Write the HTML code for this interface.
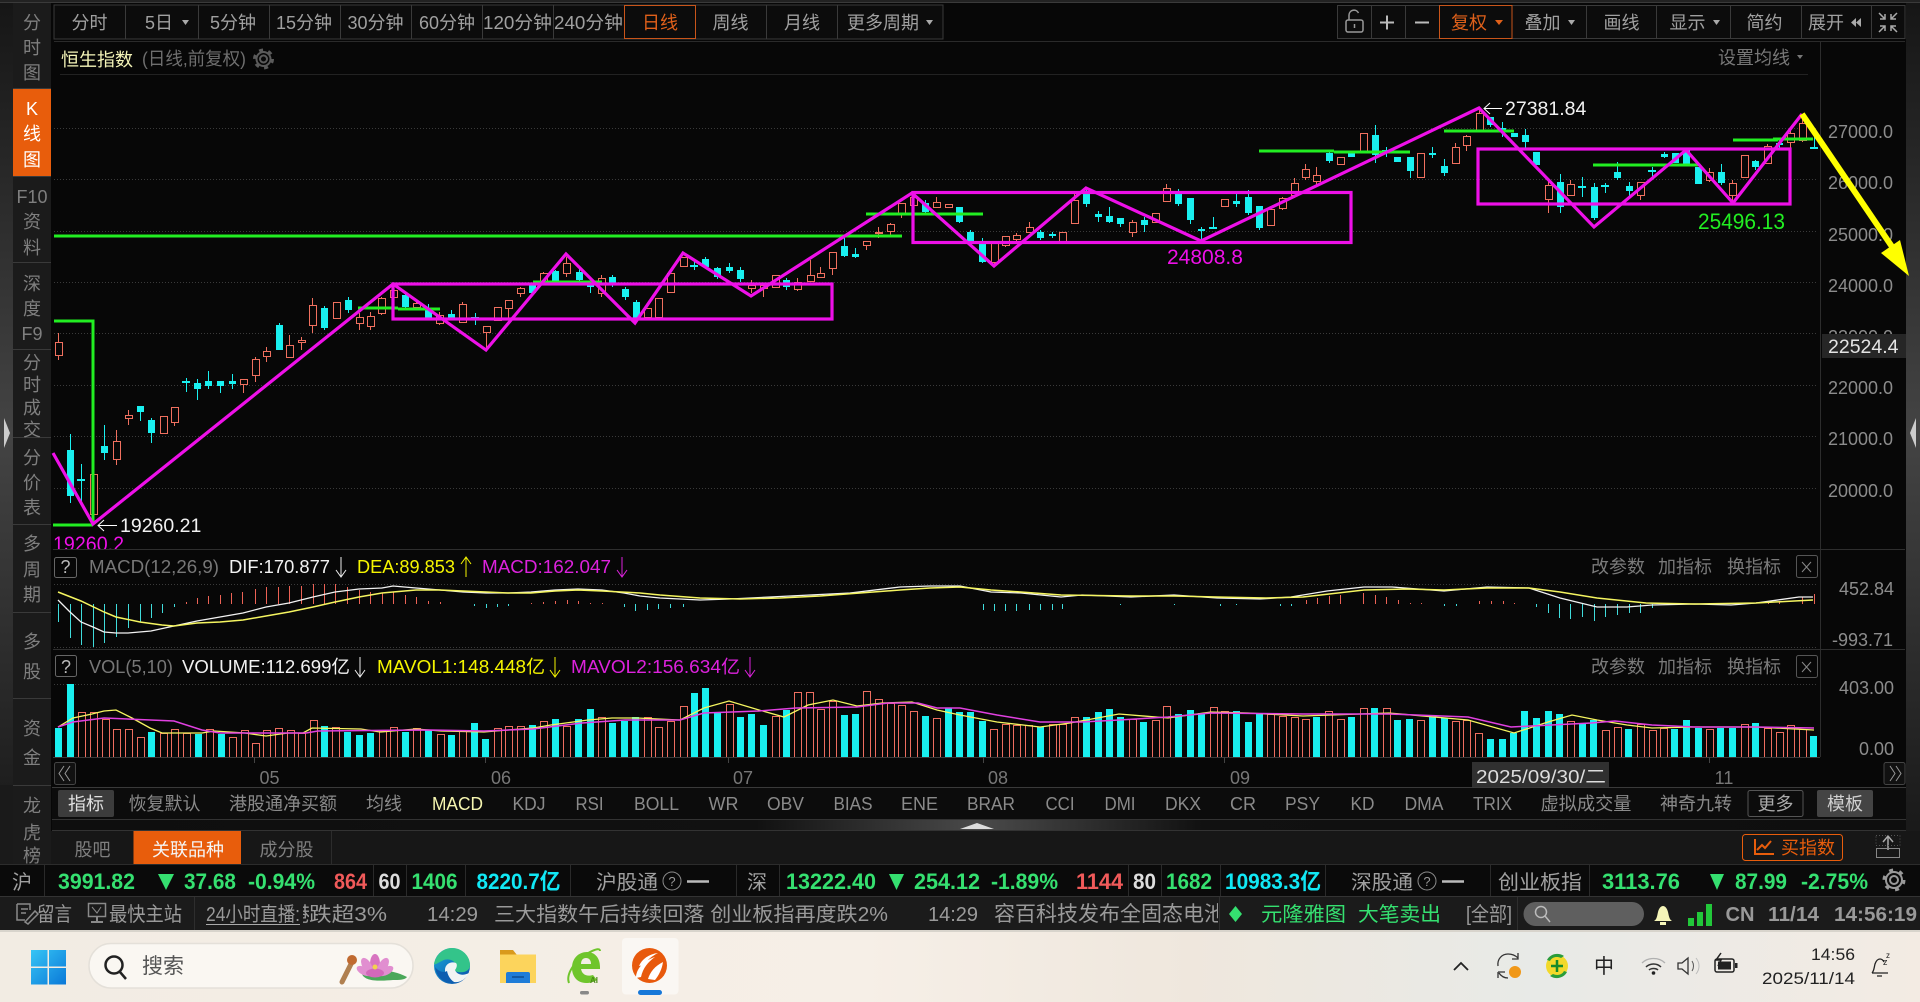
<!DOCTYPE html>
<html lang="zh"><head><meta charset="utf-8"><title>恒生指数</title>
<style>
html,body{margin:0;padding:0;background:#070707;overflow:hidden}
svg{display:block}
text{font-family:"Liberation Sans","Noto Sans CJK SC",sans-serif;font-size:18px}
.g{fill:#8a8a8a}.c{text-anchor:middle}.s{fill:#7f7f7f;text-anchor:middle}
.ax{fill:#8c8c8c;font-size:19.5px}
.b{font-weight:700;font-size:22px}
.gr{fill:#35e070}.w{fill:#f2f2f2}
.t{fill:#a0a0a0}
.r2{font-size:20px;fill:#9a9a9a}
</style></head><body>
<svg width="1920" height="1002" viewBox="0 0 1920 1002" xmlns="http://www.w3.org/2000/svg">
<defs>
<linearGradient id="st" x1="0" y1="0" x2="0" y2="1"><stop offset="0" stop-color="#161616"/><stop offset=".5" stop-color="#444"/><stop offset="1" stop-color="#161616"/></linearGradient>
<linearGradient id="mid" x1="0" y1="0" x2="1" y2="0"><stop offset="0" stop-color="#0e0e0e"/><stop offset=".38" stop-color="#111"/><stop offset=".5" stop-color="#4a4a4a"/><stop offset=".62" stop-color="#111"/><stop offset="1" stop-color="#0e0e0e"/></linearGradient>
<linearGradient id="tb" x1="0" y1="0" x2="1" y2="0"><stop offset="0" stop-color="#f2ece3"/><stop offset=".45" stop-color="#f6efe7"/><stop offset=".62" stop-color="#efe7dd"/><stop offset=".8" stop-color="#e8eae7"/><stop offset="1" stop-color="#f3ebe3"/></linearGradient>
<linearGradient id="win" x1="0" y1="0" x2="1" y2="1"><stop offset="0" stop-color="#36c5f5"/><stop offset="1" stop-color="#0a78d8"/></linearGradient>
<linearGradient id="ed" x1="0" y1="0" x2="1" y2="1"><stop offset="0" stop-color="#1ba5d8"/><stop offset="1" stop-color="#0a4fa8"/></linearGradient>
<clipPath id="cl"><rect x="52" y="510" width="120" height="39"/></clipPath>
<clipPath id="cm"><rect x="990" y="895" width="228" height="36"/></clipPath>
<clipPath id="cn"><rect x="303" y="895" width="6" height="36"/></clipPath>
</defs>

<rect width="1920" height="1002" fill="#070707"/>
<rect x="0" y="0" width="1920" height="2" fill="#222"/>
<rect x="0" y="2" width="1920" height="1" fill="#3a3a3a"/>
<!-- edges -->
<rect x="0" y="3" width="13" height="861" fill="url(#st)"/>
<rect x="1906" y="3" width="14" height="861" fill="url(#st)"/>
<path d="M4 418L10 433L4 448Z" fill="#ccc"/>
<path d="M1916 418L1910 433L1916 448Z" fill="#ccc"/>
<!-- sidebar -->
<rect x="13" y="3" width="38" height="861" fill="#1b1b1b"/>
<rect x="13" y="89" width="38" height="87" fill="#e85d0c"/>
<path d="M13 88.500H51M13 176.500H51M13 262.500H51M13 349.500H51M13 437.500H51M13 524.500H51M13 612.500H51M13 698.500H51M13 785.500H51" stroke="#3a3a3a"/>
<g>
<text class="s" x="32" y="29">分</text><text class="s" x="32" y="54">时</text><text class="s" x="32" y="79">图</text>
<text x="32" y="115" text-anchor="middle" fill="#fff">K</text><text x="32" y="140" text-anchor="middle" fill="#fff">线</text><text x="32" y="166" text-anchor="middle" fill="#fff">图</text>
<text class="s" x="32" y="203">F10</text><text class="s" x="32" y="228">资</text><text class="s" x="32" y="254">料</text>
<text class="s" x="32" y="290">深</text><text class="s" x="32" y="315">度</text><text class="s" x="32" y="340">F9</text>
<text class="s" x="32" y="369">分</text><text class="s" x="32" y="391">时</text><text class="s" x="32" y="414">成</text><text class="s" x="32" y="436">交</text>
<text class="s" x="32" y="464">分</text><text class="s" x="32" y="489">价</text><text class="s" x="32" y="514">表</text>
<text class="s" x="32" y="550">多</text><text class="s" x="32" y="576">周</text><text class="s" x="32" y="601">期</text>
<text class="s" x="32" y="648">多</text><text class="s" x="32" y="678">股</text>
<text class="s" x="32" y="735">资</text><text class="s" x="32" y="764">金</text>
</g>
<!-- toolbar -->
<rect x="54" y="5" width="889" height="34" fill="#0c0c0c" stroke="#3a3a3a"/>
<path d="M125.500 5V39M198.500 5V39M269.500 5V39M340.500 5V39M411.500 5V39M482.500 5V39M553.500 5V39M695.500 5V39M766.500 5V39M837.500 5V39" stroke="#3a3a3a"/>
<rect x="624.500" y="5.500" width="71" height="33" fill="#0c0c0c" stroke="#c9551a"/>
<g class="t">
<text class="c" x="89.500" y="29">分时</text><text class="c" x="159" y="29">5日</text>
<text class="c" x="233" y="29">5分钟</text><text class="c" x="304" y="29">15分钟</text><text class="c" x="375.500" y="29">30分钟</text><text class="c" x="447" y="29">60分钟</text><text class="c" x="517.500" y="29" textLength="69" lengthAdjust="spacingAndGlyphs">120分钟</text><text class="c" x="588.500" y="29" textLength="69" lengthAdjust="spacingAndGlyphs">240分钟</text>
<text class="c" x="660" y="29" style="fill:#e0601a">日线</text><text class="c" x="730.500" y="29">周线</text><text class="c" x="802" y="29">月线</text><text class="c" x="883" y="29">更多周期</text>
</g>
<path d="M182 20h7l-3.500 5zM926 20h7l-3.500 5z" fill="#aaa"/>
<rect x="1337.500" y="5.500" width="567.500" height="33" fill="#0c0c0c" stroke="#3a3a3a"/>
<path d="M1371.500 5V39M1405.500 5V39M1586.500 5V39M1656.500 5V39M1730.500 5V39M1801.500 5V39M1871.500 5V39" stroke="#3a3a3a"/>
<rect x="1439.500" y="5.500" width="72.500" height="33" fill="#0c0c0c" stroke="#c9551a"/>
<g fill="none" stroke="#999" stroke-width="1.500"><rect x="1346" y="20" width="17" height="12" rx="2"/><path d="M1349 20v-5a5 5 0 0 1 9.500-2"/><path d="M1354.500 24v4"/></g>
<path d="M1380 22.500h14M1387 15.500v14M1415 22.500h14" stroke="#bbb" stroke-width="2"/>
<g class="t">
<text class="c" x="1469" y="29" style="fill:#e0601a">复权</text><text class="c" x="1542.500" y="29">叠加</text><text class="c" x="1621.500" y="29">画线</text><text class="c" x="1687.500" y="29">显示</text><text class="c" x="1764.500" y="29">简约</text><text class="c" x="1826" y="29">展开</text>
</g>
<path d="M1495 20h8l-4 5z" fill="#e0601a"/>
<path d="M1568 20h7l-3.500 5zM1713 20h7l-3.500 5z" fill="#aaa"/>
<path d="M1856 18l-5 4.500 5 4.500zM1861 18l-5 4.500 5 4.500z" fill="#aaa"/>
<path d="M1879 13l6 6M1885 14v5h-5M1897 13l-6 6M1891 14v5h5M1879 32l6-6M1885 31v-5h-5M1897 32l-6-6M1891 31v-5h5" stroke="#aaa" stroke-width="1.500" fill="none"/>
<path d="M54 41.500H1905" stroke="#2a2a2a"/>
<!-- title -->
<text x="61" y="66" style="fill:#f5f5b8">恒生指数</text>
<text x="142" y="65" style="fill:#6e6e6e;font-size:18px" textLength="104" lengthAdjust="spacingAndGlyphs">(日线,前复权)</text>
<circle cx="263.500" cy="59" r="3.500" fill="none" stroke="#5a5a5a" stroke-width="2"/>
<circle cx="263.500" cy="59" r="7" fill="none" stroke="#5a5a5a" stroke-width="2"/>
<circle cx="263.500" cy="59" r="9" fill="none" stroke="#5a5a5a" stroke-width="3" stroke-dasharray="4 5.420"/>
<text x="1718" y="64" style="fill:#777;font-size:18px">设置均线</text>
<path d="M1797 55h6l-3 4z" fill="#777"/>
<path d="M60 74.500H1808" stroke="#222"/>
<path d="M1820.500 42V757" stroke="#2c2c2c"/>
<!-- grid -->
<path d="M54 128.500H1818M54 179.500H1818M54 231.500H1818M54 282.500H1818M54 333.500H1818M54 385.500H1818M54 436.500H1818M54 488.500H1818" stroke="#3a3a3a" stroke-dasharray="1 2" fill="none"/>
<!-- axis -->
<g class="ax">
<text x="1828" y="138">27000.0</text><text x="1828" y="189">26000.0</text><text x="1828" y="241">25000.0</text><text x="1828" y="292">24000.0</text><text x="1828" y="343">23000.0</text><text x="1828" y="394">22000.0</text><text x="1828" y="445">21000.0</text><text x="1828" y="497">20000.0</text>
</g>
<rect x="1822" y="334" width="84" height="24" fill="#262626"/>
<text x="1828" y="353" style="font-size:19.500px;fill:#e4e4e4">22524.4</text>

<!-- red wicks -->
<path stroke="#f0705f" fill="none" d="M58.500 333V360M93.500 474V523M116.500 430V465M128.500 410V425M174.500 407V426M243.500 379V393M255.500 357V382M266.500 347V362M289.500 335V357M301.500 337V350M312.500 298V333M359.500 313V330M370.500 312V330M381.500 297V315M393.500 285V307M416.500 300V310M439.500 312V325M462.500 302V323M486.500 326V351M508.500 300V320M520.500 287V297M543.500 272V285M566.500 257V277M601.500 275V297M751.500 280V293M763.500 283V297M797.500 278V291M810.500 260V282M820.500 267V278M832.500 252V275M866.500 241V250M878.500 227V238M890.500 223V235M901.500 203V218M913.500 195V208M936.500 197V208M994.500 243V266M1005.500 236V247M1016.500 233V243M1029.500 222V233M1074.500 193V223M1132.500 220V237M1166.500 184V202M1282.500 197V210M1294.500 178V198M1305.500 164V180M1316.500 167V185M1455.500 143V163M1466.500 135V151M1479.500 110V130M1548.500 180V213M1570.500 180V195M1640.500 182V200M1709.500 168V182M1732.500 180V205M1767.500 144V163M1790.500 130V150M1802.500 115V142"/>
<!-- red bodies -->
<path transform="translate(.5 .5)" stroke="#f0705f" fill="#070707" d="M55 342h7v13h-7zM90 474h7v40h-7zM113 441h7v18h-7zM125 415h7v3h-7zM160 416h7v17h-7zM171 407h7v15h-7zM240 379h7v5h-7zM252 359h7v16h-7zM263 351h7v5h-7zM286 345h7v12h-7zM298 340h7v2h-7zM309 305h7v20h-7zM333 302h7v16h-7zM356 317h7v6h-7zM367 316h7v10h-7zM378 298h7v15h-7zM390 290h7v7h-7zM413 303h7v4h-7zM436 315h7v8h-7zM459 304h7v18h-7zM483 326h7v6h-7zM494 307h7v13h-7zM505 300h7v8h-7zM517 288h7v5h-7zM540 273h7v10h-7zM563 263h7v10h-7zM598 278h7v15h-7zM644 308h7v9h-7zM655 298h7v19h-7zM667 273h7v19h-7zM680 257h7v9h-7zM748 285h7v3h-7zM760 285h7v3h-7zM772 275h7v12h-7zM794 282h7v7h-7zM807 275h7v6h-7zM817 273h7v4h-7zM829 252h7v16h-7zM863 241h7v4h-7zM875 232h7v1h-7zM887 224h7v7h-7zM898 203h7v10h-7zM910 197h7v8h-7zM933 202h7v5h-7zM945 204h7v3h-7zM991 243h7v19h-7zM1002 236h7v9h-7zM1013 235h7v4h-7zM1026 227h7v5h-7zM1059 232h7v9h-7zM1071 200h7v23h-7zM1129 222h7v10h-7zM1152 213h7v9h-7zM1163 188h7v13h-7zM1221 199h7v7h-7zM1267 209h7v16h-7zM1279 198h7v10h-7zM1291 183h7v12h-7zM1302 169h7v8h-7zM1313 175h7v6h-7zM1337 157h7v7h-7zM1360 133h7v18h-7zM1417 153h7v24h-7zM1452 147h7v16h-7zM1463 136h7v9h-7zM1476 113h7v17h-7zM1545 185h7v14h-7zM1567 184h7v11h-7zM1637 182h7v13h-7zM1706 172h7v8h-7zM1729 183h7v12h-7zM1741 155h7v22h-7zM1764 146h7v17h-7zM1787 133h7v9h-7zM1799 123h7v17h-7z"/>
<!-- cyan wicks -->
<path stroke="#19f0f0" fill="none" d="M70.500 434V503M81.500 464V502M104.500 425V460M140.500 406V421M151.500 418V443M186.500 378V392M197.500 379V400M208.500 371V389M220.500 381V393M232.500 374V389M279.500 323V350M324.500 306V330M348.500 297V313M405.500 293V308M428.500 304V320M451.500 310V320M475.500 313V325M532.500 283V295M555.500 270V283M579.500 267V282M590.500 282V293M612.500 275V287M625.500 287V300M636.500 300V320M694.500 260V270M705.500 257V268M717.500 267V279M729.500 263V273M740.500 267V282M786.500 278V290M844.500 238V257M855.500 248V258M925.500 200V213M959.500 207V223M970.500 230V241M982.500 238V263M1040.500 230V240M1052.500 232V238M1086.500 187V207M1098.500 211V222M1109.500 207V223M1120.500 218V227M1144.500 217V232M1178.500 189V206M1190.500 198V224M1201.500 227V240M1213.500 217V228M1236.500 193V207M1248.500 190V215M1259.500 206V230M1329.500 150V163M1375.500 125V163M1386.500 147V157M1410.500 157V178M1432.500 147V158M1444.500 159V176M1490.500 117V127M1502.500 122V137M1525.500 129V148M1560.500 174V213M1582.500 177V197M1594.500 183V220M1605.500 183V193M1617.500 162V180M1629.500 182V197M1652.500 167V177M1664.500 152V158M1686.500 148V165M1721.500 164V185M1755.500 160V170M1779.500 140V150M1814.500 137V148"/>
<!-- cyan bodies -->
<path fill="#19f0f0" d="M67 450h7v46h-7zM77 479h8v2h-8zM101 446h7v7h-7zM137 406h7v6h-7zM148 420h7v13h-7zM182 381h8v2h-8zM194 383h7v6h-7zM205 381h7v5h-7zM217 381h7v5h-7zM229 381h7v3h-7zM276 325h7v25h-7zM321 308h7v20h-7zM345 300h7v10h-7zM402 295h7v12h-7zM425 308h7v10h-7zM448 314h7v4h-7zM471 317h8v2h-8zM529 285h7v8h-7zM552 271h7v11h-7zM576 272h7v8h-7zM587 285h7v2h-7zM609 277h7v6h-7zM622 289h7v8h-7zM633 302h7v16h-7zM690 265h8v2h-8zM702 259h7v8h-7zM714 268h7v9h-7zM726 267h7v4h-7zM737 270h7v9h-7zM783 280h7v7h-7zM841 246h7v10h-7zM852 254h7v3h-7zM922 203h7v9h-7zM956 207h7v15h-7zM967 232h7v9h-7zM979 243h7v19h-7zM1037 232h7v6h-7zM1049 234h7v2h-7zM1083 193h7v11h-7zM1095 214h7v3h-7zM1106 216h7v6h-7zM1117 218h7v6h-7zM1141 220h7v5h-7zM1175 193h7v11h-7zM1187 198h7v22h-7zM1198 229h7v2h-7zM1209 227h8v2h-8zM1233 201h7v3h-7zM1245 197h7v16h-7zM1256 206h7v22h-7zM1326 153h7v8h-7zM1348 153h7v4h-7zM1372 135h7v20h-7zM1382 150h8v2h-8zM1394 157h7v5h-7zM1407 157h7v14h-7zM1429 153h7v2h-7zM1441 166h7v7h-7zM1487 117h7v8h-7zM1499 128h7v2h-7zM1511 133h7v4h-7zM1522 135h7v7h-7zM1533 152h7v13h-7zM1557 182h7v25h-7zM1578 186h8v2h-8zM1591 187h7v31h-7zM1601 185h8v2h-8zM1614 172h7v6h-7zM1626 186h7v5h-7zM1648 170h8v2h-8zM1661 154h7v3h-7zM1672 153h7v10h-7zM1683 150h7v14h-7zM1695 167h7v17h-7zM1718 172h7v11h-7zM1752 161h7v6h-7zM1776 143h7v2h-7zM1810 147h8v2h-8z"/>

<!-- green lines -->
<g stroke="#22ee22" stroke-width="3" fill="none">
<path d="M54 236H902"/>
<path d="M54 321H93V524M53 525H93" />
<path d="M358 308H398M398 309H440M533 282H602M866 214H983M1259 151H1334M1334 152H1410M1444 131H1514M1593 165H1698M1733 140H1778M1773 139H1813"/>
</g>
<!-- magenta -->
<g stroke="#ee10e8" stroke-width="3.200" fill="none">
<path d="M53 453L93 524L393 284L486 350L566 254L635 323L683 253L751 296L912 193L994 266L1086 188L1201 241L1479 108L1594 227L1686 150L1733 203L1802 114"/>
<rect x="393" y="284" width="439" height="35"/>
<rect x="913" y="192.500" width="438" height="50"/>
<rect x="1478" y="149" width="312" height="55"/>
</g>
<!-- yellow arrow -->
<path d="M1802 114L1897 254" stroke="#ffff00" stroke-width="6" fill="none"/>
<path d="M1909 276L1881 253L1900 240Z" fill="#ffff00"/>
<!-- labels -->
<path d="M117 525.500H98M104 520l-6 5.500 6 5.500M1502 108.500H1484M1490 103l-6 5.500 6 5.500" stroke="#fff" fill="none"/>
<text x="120" y="532" style="fill:#f2f2f2;font-size:19.500px">19260.21</text>
<text x="1505" y="115" style="fill:#f2f2f2;font-size:19.500px">27381.84</text>
<text x="53" y="551" clip-path="url(#cl)" style="fill:#ee10e8;font-size:21px" textLength="71" lengthAdjust="spacingAndGlyphs">19260.2</text>
<text x="1167" y="264" style="fill:#ee10e8;font-size:21px">24808.8</text>
<text x="1698" y="229" style="fill:#22ee22;font-size:22px" textLength="87" lengthAdjust="spacingAndGlyphs">25496.13</text>

<!-- MACD panel -->
<path d="M53 549.500H1905M53 649.500H1905" stroke="#2e2e2e"/>
<path d="M54 584.500H1818M54 647.500H1818M54 684.500H1818" stroke="#3a3a3a" stroke-dasharray="1 2" fill="none"/>
<rect x="54.500" y="557.500" width="22" height="20" rx="2" fill="none" stroke="#666"/>
<text x="65.500" y="573" class="c" style="fill:#bbb">?</text>
<text x="89" y="573" style="fill:#777" textLength="130" lengthAdjust="spacingAndGlyphs">MACD(12,26,9)</text>
<text x="229" y="573" style="fill:#f2f2f2" textLength="101" lengthAdjust="spacingAndGlyphs">DIF:170.877</text>
<text x="357" y="573" style="fill:#f5f500" textLength="98" lengthAdjust="spacingAndGlyphs">DEA:89.853</text>
<text x="482" y="573" style="fill:#dd22dd" textLength="129" lengthAdjust="spacingAndGlyphs">MACD:162.047</text>
<path d="M341 557V577M336 570l5 7 5-7" stroke="#eee" fill="none"/>
<path d="M466 577V557M461 564l5-7 5 7" stroke="#f5f500" fill="none"/>
<path d="M622 557V577M617 570l5 7 5-7" stroke="#dd22dd" fill="none"/>
<g class="g" style="fill:#7a7a7a">
<text x="1591" y="573">改参数</text><text x="1658" y="573">加指标</text><text x="1727" y="573">换指标</text>
<text x="1591" y="673">改参数</text><text x="1658" y="673">加指标</text><text x="1727" y="673">换指标</text>
</g>
<g fill="none" stroke="#555"><rect x="1796.500" y="555.500" width="21" height="22" rx="2"/><rect x="1796.500" y="655.500" width="21" height="22" rx="2"/></g>
<path d="M1802 562l9 10M1811 562l-9 10M1802 662l9 10M1811 662l-9 10" stroke="#888"/>
<g class="ax"><text x="1839" y="595">452.84</text><text x="1832" y="646">-993.71</text><text x="1839" y="694">403.00</text><text x="1859" y="755">0.00</text></g>
<!-- hist -->
<path stroke="#3fdcdc" fill="none" d="M58.500 604V622M70.500 604V638M81.500 604V645M93.500 604V647M104.500 604V643M116.500 604V637M128.500 604V628M140.500 604V622M151.500 604V618M162.500 604V613M174.500 604V607M474.500 604V606M486.500 604V608M497.500 604V607M508.500 604V606M624.500 604V607M635.500 604V611M647.500 604V610M658.500 604V609M670.500 604V608M683.500 604V607M983.500 604V610M994.500 604V611M1005.500 604V611M1016.500 604V611M1029.500 604V610M1040.500 604V610M1052.500 604V610M1062.500 604V609M1120.500 604V605M1174.500 604V605M1220.500 604V606M1236.500 604V605M1280.500 604V606M1291.500 604V606M1444.500 604V606M1456.500 604V606M1536.500 604V607M1548.500 604V613M1559.500 604V618M1570.500 604V619M1582.500 604V617M1594.500 604V621M1605.500 604V617M1617.500 604V615M1629.500 604V613M1640.500 604V613M1652.500 604V608"/>
<path stroke="#ec6255" fill="none" d="M186.500 604V602M197.500 604V598M208.500 604V596M220.500 604V595M231.500 604V593M242.500 604V592M255.500 604V589M266.500 604V587M278.500 604V587M289.500 604V586M301.500 604V586M313.500 604V584M324.500 604V584M335.500 604V584M347.500 604V587M359.500 604V590M370.500 604V592M382.500 604V593M393.500 604V592M405.500 604V595M416.500 604V597M428.500 604V601M440.500 604V602M531.500 604V603M543.500 604V602M555.500 604V601M567.500 604V600M578.500 604V601M590.500 604V603M602.500 604V603M1306.500 604V600M1317.500 604V598M1329.500 604V596M1340.500 604V595M1363.500 604V593M1375.500 604V595M1386.500 604V597M1398.500 604V600M1410.500 604V603M1421.500 604V603M1479.500 604V601M1491.500 604V601M1503.500 604V601M1514.500 604V603M1768.500 604V603M1779.500 604V601M1802.500 604V597M1814.500 604V594"/>
<polyline fill="none" stroke="#f2f2f2" stroke-width="1.300" points="58,600 70,612 81,622 93,627 104,632 116,633 128,633 151,631 174,626 197,621 220,617 243,613 266,607 289,603 313,597 335,592 359,589 382,588 393,586 416,588 440,590 463,592 486,593 508,593 531,592 555,590 578,589 602,590 624,593 640,596 660,598 700,600 730,599 770,597 810,595 850,593 900,587 930,586 960,586 991,592 1021,593 1061,597 1082,595 1131,597 1174,595 1217,598 1260,599 1291,597 1327,591 1364,587 1392,587 1444,591 1487,587 1529,588 1560,598 1597,607 1627,607 1652,605 1695,604 1731,605 1756,603 1799,597 1813,597"/>
<polyline fill="none" stroke="#f5f560" stroke-width="1.500" points="58,592 81,601 104,612 116,617 140,622 162,625 174,626 197,623 220,622 243,620 266,616 289,612 313,607 335,602 359,597 382,593 393,592 416,590 440,590 463,591 486,592 508,593 531,593 555,591 578,590 602,591 640,593 660,595 700,598 740,599 780,598 820,596 860,593 900,590 930,588 960,587 991,590 1021,592 1061,595 1131,596 1174,596 1217,597 1266,598 1303,597 1364,590 1407,589 1444,590 1487,588 1529,588 1560,592 1597,598 1646,603 1695,604 1756,603 1813,600"/>

<!-- VOL header -->
<rect x="55.500" y="655.500" width="21" height="21" rx="2" fill="none" stroke="#666"/>
<text x="66" y="673" class="c" style="fill:#bbb">?</text>
<text x="89" y="673" style="fill:#777" textLength="84" lengthAdjust="spacingAndGlyphs">VOL(5,10)</text>
<text x="182" y="673" style="fill:#f2f2f2" textLength="168" lengthAdjust="spacingAndGlyphs">VOLUME:112.699亿</text>
<text x="377" y="673" style="fill:#f5f500" textLength="168" lengthAdjust="spacingAndGlyphs">MAVOL1:148.448亿</text>
<text x="571" y="673" style="fill:#dd22dd" textLength="169" lengthAdjust="spacingAndGlyphs">MAVOL2:156.634亿</text>
<path d="M360 657V677M355 670l5 7 5-7" stroke="#eee" fill="none"/>
<path d="M555 657V677M550 670l5 7 5-7" stroke="#f5f500" fill="none"/>
<path d="M750 657V677M745 670l5 7 5-7" stroke="#dd22dd" fill="none"/>
<!-- VOL red -->
<path transform="translate(.5 .5)" stroke="#ee6e60" fill="#070707" d="M78 712h7v45h-7zM90 712h7v45h-7zM102 719h7v38h-7zM113 729h7v28h-7zM125 729h7v28h-7zM137 737h7v20h-7zM160 733h7v24h-7zM171 729h7v28h-7zM183 733h7v24h-7zM206 729h7v28h-7zM229 737h7v20h-7zM241 730h7v27h-7zM252 743h7v14h-7zM263 730h7v27h-7zM275 728h7v29h-7zM287 730h7v27h-7zM298 733h7v24h-7zM310 720h7v37h-7zM332 727h7v30h-7zM379 731h7v26h-7zM390 727h7v30h-7zM413 728h7v29h-7zM437 734h7v23h-7zM459 730h7v27h-7zM494 728h7v29h-7zM505 726h7v31h-7zM517 726h7v31h-7zM540 721h7v36h-7zM563 726h7v31h-7zM598 717h7v40h-7zM644 717h7v40h-7zM655 727h7v30h-7zM667 721h7v36h-7zM680 706h7v51h-7zM726 704h7v53h-7zM772 716h7v41h-7zM794 692h7v65h-7zM806 692h7v65h-7zM817 709h7v48h-7zM829 701h7v56h-7zM863 691h7v66h-7zM875 699h7v58h-7zM887 703h7v54h-7zM898 705h7v52h-7zM910 711h7v46h-7zM933 718h7v39h-7zM990 729h7v28h-7zM1002 724h7v33h-7zM1013 725h7v32h-7zM1025 725h7v32h-7zM1049 724h7v33h-7zM1059 724h7v33h-7zM1071 717h7v40h-7zM1129 719h7v38h-7zM1152 720h7v37h-7zM1163 706h7v51h-7zM1210 707h7v50h-7zM1221 711h7v46h-7zM1267 714h7v43h-7zM1279 716h7v41h-7zM1291 717h7v40h-7zM1302 719h7v38h-7zM1325 711h7v46h-7zM1337 719h7v38h-7zM1360 708h7v49h-7zM1383 708h7v49h-7zM1417 720h7v37h-7zM1452 721h7v36h-7zM1463 720h7v37h-7zM1475 733h7v24h-7zM1567 721h7v36h-7zM1602 730h7v27h-7zM1614 727h7v30h-7zM1637 724h7v33h-7zM1649 730h7v27h-7zM1660 728h7v29h-7zM1706 729h7v28h-7zM1741 724h7v33h-7zM1764 728h7v29h-7zM1776 732h7v25h-7zM1787 725h7v32h-7zM1799 729h7v28h-7z"/>
<!-- VOL cyan -->
<path fill="#19f0f0" d="M55 728h7v29h-7zM67 684h7v73h-7zM148 732h7v25h-7zM195 734h7v23h-7zM218 734h7v23h-7zM321 726h7v31h-7zM344 732h7v25h-7zM356 735h7v22h-7zM367 733h7v24h-7zM402 732h7v25h-7zM425 730h7v27h-7zM448 735h7v22h-7zM471 723h7v34h-7zM482 739h7v18h-7zM529 725h7v32h-7zM552 719h7v38h-7zM575 719h7v38h-7zM587 709h7v48h-7zM609 723h7v34h-7zM621 721h7v36h-7zM632 717h7v40h-7zM691 693h7v64h-7zM702 688h7v69h-7zM714 713h7v44h-7zM737 717h7v40h-7zM748 714h7v43h-7zM760 725h7v32h-7zM783 710h7v47h-7zM841 715h7v42h-7zM852 714h7v43h-7zM922 716h7v41h-7zM945 708h7v49h-7zM956 712h7v45h-7zM967 712h7v45h-7zM979 721h7v36h-7zM1037 727h7v30h-7zM1083 717h7v40h-7zM1095 712h7v45h-7zM1106 709h7v48h-7zM1117 717h7v40h-7zM1140 722h7v35h-7zM1175 714h7v43h-7zM1187 710h7v47h-7zM1198 713h7v44h-7zM1233 711h7v46h-7zM1245 722h7v35h-7zM1256 713h7v44h-7zM1313 717h7v40h-7zM1348 717h7v40h-7zM1371 708h7v49h-7zM1394 720h7v37h-7zM1406 719h7v38h-7zM1429 717h7v40h-7zM1441 718h7v39h-7zM1487 739h7v18h-7zM1499 739h7v18h-7zM1510 733h7v24h-7zM1521 711h7v46h-7zM1533 718h7v39h-7zM1545 711h7v46h-7zM1556 714h7v43h-7zM1579 723h7v34h-7zM1590 720h7v37h-7zM1625 729h7v28h-7zM1671 729h7v28h-7zM1683 720h7v37h-7zM1695 728h7v29h-7zM1717 728h7v29h-7zM1729 728h7v29h-7zM1752 723h7v34h-7zM1810 736h7v21h-7z"/>
<polyline fill="none" stroke="#f5f560" stroke-width="1.300" points="58,727 73,718 92,714 104,711 116,710 132,718 150,728 162,733 202,733 214,731 245,733 266,736 288,733 303,733 312,728 361,729 380,732 416,729 441,731 484,732 508,730 533,728 551,725 588,720 612,718 637,718 680,720 704,708 729,701 759,710 784,717 808,705 833,700 857,706 882,703 912,702 937,710 960,715 997,722 1040,727 1070,723 1119,714 1168,718 1211,712 1248,713 1303,716 1389,713 1468,720 1514,733 1548,722 1572,715 1597,720 1627,725 1652,728 1695,727 1756,727 1814,730"/>
<polyline fill="none" stroke="#e040e0" stroke-width="1.500" points="58,727 73,722 104,718 174,721 202,730 220,733 306,733 318,731 429,730 484,731 533,729 582,723 625,720 680,720 704,713 759,711 796,708 857,707 888,703 918,703 937,708 960,708 997,715 1040,722 1082,722 1119,720 1168,717 1211,713 1303,714 1389,714 1468,717 1511,727 1591,723 1615,721 1652,725 1695,727 1756,727 1814,728"/>
<path d="M53 757.500H1820" stroke="#3a3a3a"/>

<!-- time axis -->
<path d="M254.500 757V763M485.500 757V763M728.500 757V763M983.500 757V763M1224.500 757V763M1709.500 757V763" stroke="#444"/>
<g><text class="c" x="269.500" y="784" style="fill:#777">05</text><text class="c" x="501" y="784" style="fill:#777">06</text><text class="c" x="743" y="784" style="fill:#777">07</text><text class="c" x="998" y="784" style="fill:#777">08</text><text class="c" x="1240" y="784" style="fill:#777">09</text><text class="c" x="1724" y="784" style="fill:#777">11</text></g>
<rect x="1472" y="762" width="137" height="25" fill="#303030"/>
<text x="1476" y="783" style="fill:#ddd" textLength="130" lengthAdjust="spacingAndGlyphs">2025/09/30/二</text>
<rect x="54.500" y="762.500" width="21" height="22" rx="2" fill="#111" stroke="#444"/>
<rect x="1884" y="762.500" width="21" height="22" rx="2" fill="#111" stroke="#444"/>
<path d="M64 766l-5 7.500 5 7.500M70 766l-5 7.500 5 7.500M1890 766l5 7.500-5 7.500M1896 766l5 7.500-5 7.500" stroke="#999" fill="none"/>
<path d="M52 787.500H1906" stroke="#3a3a3a"/>

<!-- indicators -->
<rect x="52" y="788" width="1854" height="31" fill="#0c0c0c"/>
<rect x="58" y="790" width="56" height="27" rx="2" fill="#3c3c3c"/>
<rect x="1817" y="790" width="56" height="27" rx="2" fill="#444"/>
<rect x="1748" y="790.500" width="55" height="26" rx="2" fill="none" stroke="#555"/>
<g>
<text x="68" y="810" style="fill:#e0e0e0">指标</text>
<text x="128.500" y="810" class="g">恢复默认</text>
<text x="229" y="810" class="g">港股通净买额</text>
<text x="366" y="810" class="g">均线</text>
<text x="432" y="810" style="fill:#f5f5b0" textLength="51" lengthAdjust="spacingAndGlyphs">MACD</text>
<text x="512.500" y="810" class="g" textLength="33" lengthAdjust="spacingAndGlyphs">KDJ</text>
<text x="575.500" y="810" class="g" textLength="28" lengthAdjust="spacingAndGlyphs">RSI</text>
<text x="634" y="810" class="g" textLength="45" lengthAdjust="spacingAndGlyphs">BOLL</text>
<text x="708.500" y="810" class="g" textLength="30" lengthAdjust="spacingAndGlyphs">WR</text>
<text x="767" y="810" class="g" textLength="37" lengthAdjust="spacingAndGlyphs">OBV</text>
<text x="833.500" y="810" class="g" textLength="39" lengthAdjust="spacingAndGlyphs">BIAS</text>
<text x="901" y="810" class="g" textLength="37" lengthAdjust="spacingAndGlyphs">ENE</text>
<text x="967" y="810" class="g" textLength="48" lengthAdjust="spacingAndGlyphs">BRAR</text>
<text x="1045.500" y="810" class="g" textLength="29" lengthAdjust="spacingAndGlyphs">CCI</text>
<text x="1104.500" y="810" class="g" textLength="31" lengthAdjust="spacingAndGlyphs">DMI</text>
<text x="1165" y="810" class="g" textLength="36" lengthAdjust="spacingAndGlyphs">DKX</text>
<text x="1230" y="810" class="g" textLength="26" lengthAdjust="spacingAndGlyphs">CR</text>
<text x="1285" y="810" class="g" textLength="35" lengthAdjust="spacingAndGlyphs">PSY</text>
<text x="1350.500" y="810" class="g" textLength="24" lengthAdjust="spacingAndGlyphs">KD</text>
<text x="1404.500" y="810" class="g" textLength="39" lengthAdjust="spacingAndGlyphs">DMA</text>
<text x="1473" y="810" class="g" textLength="39" lengthAdjust="spacingAndGlyphs">TRIX</text>
<text x="1540.500" y="810" class="g" textLength="91" lengthAdjust="spacingAndGlyphs">虚拟成交量</text>
<text x="1660" y="810" class="g" textLength="72" lengthAdjust="spacingAndGlyphs">神奇九转</text>
<text x="1775.500" y="810" class="g c" style="fill:#aaa">更多</text>
<text x="1845" y="810" class="c" style="fill:#cfcfcf">模板</text>
</g>
<rect x="52" y="819" width="1854" height="12" fill="url(#mid)"/>
<path d="M52 819.500H1906M52 830.500H1906" stroke="#333"/>
<path d="M960 829l17-6 17 6z" fill="#ddd"/>
<!-- tabs -->
<rect x="0" y="831" width="1920" height="33" fill="#171717"/>
<rect x="13" y="785" width="38" height="79" fill="#1b1b1b"/>
<rect x="0" y="785" width="13" height="79" fill="#1a1a1a"/>
<path d="M13 785.500H51" stroke="#3a3a3a"/>
<text class="s" x="32" y="812">龙</text><text class="s" x="32" y="839">虎</text><text class="s" x="32" y="862">榜</text>
<rect x="133.500" y="831" width="107.500" height="33" fill="#e85d0c"/>
<path d="M331.500 831V864" stroke="#2c2c2c"/>
<text x="74.500" y="856" style="fill:#7f7f7f">股吧</text>
<text x="152" y="856" style="fill:#f5f5f5">关联品种</text>
<text x="259.500" y="856" style="fill:#7f7f7f">成分股</text>
<rect x="1742.500" y="834.500" width="100" height="26" rx="3" fill="none" stroke="#e85d0c"/>
<path d="M1755 839v15h19M1757 850l5-5 3 3 6-7" stroke="#e85d0c" stroke-width="2" fill="none"/>
<text x="1781" y="854" style="fill:#e85d0c">买指数</text>
<path d="M1888 850v-13M1883 842l5-6 5 6" stroke="#aaa" stroke-width="1.500" fill="none"/>
<rect x="1876" y="835.500" width="24" height="10" fill="none" stroke="#555" stroke-dasharray="1 2"/>
<rect x="1876.500" y="848.500" width="23" height="9" fill="none" stroke="#888"/>

<!-- status 1 -->
<rect x="0" y="864" width="1920" height="32" fill="#0a0a0a"/>
<path d="M0 864.500H1920" stroke="#2c2c2c"/>
<path d="M44.500 865V896M373.500 865V896M406.500 865V896M465.500 865V896M570.500 865V896M736.500 865V896M779.500 865V896M1128.500 865V896M1161.500 865V896M1220.500 865V896M1325.500 865V896M1490.500 865V896M1589.500 865V896" stroke="#2a2a2a"/>
<text x="12" y="889" style="fill:#a0a0a0;font-size:20px">沪</text>
<g>
<text class="b gr" x="58" y="889" textLength="77" lengthAdjust="spacingAndGlyphs">3991.82</text>
<text class="b gr" x="184" y="889" textLength="52" lengthAdjust="spacingAndGlyphs">37.68</text>
<text class="b gr" x="248" y="889" textLength="67" lengthAdjust="spacingAndGlyphs">-0.94%</text>
<text class="b gr" x="411.500" y="889" textLength="46" lengthAdjust="spacingAndGlyphs">1406</text>
<text class="b gr" x="786" y="889" textLength="90" lengthAdjust="spacingAndGlyphs">13222.40</text>
<text class="b gr" x="914" y="889" textLength="66" lengthAdjust="spacingAndGlyphs">254.12</text>
<text class="b gr" x="991" y="889" textLength="67" lengthAdjust="spacingAndGlyphs">-1.89%</text>
<text class="b gr" x="1166" y="889" textLength="46" lengthAdjust="spacingAndGlyphs">1682</text>
<text class="b gr" x="1602" y="889" textLength="78" lengthAdjust="spacingAndGlyphs">3113.76</text>
<text class="b gr" x="1735" y="889" textLength="52" lengthAdjust="spacingAndGlyphs">87.99</text>
<text class="b gr" x="1801" y="889" textLength="67" lengthAdjust="spacingAndGlyphs">-2.75%</text>
</g>
<path d="M158 874h16l-8 16zM889 874h15l-7.500 16zM1710 874h14l-7 16z" fill="#35e070"/>
<text class="b" x="334" y="889" style="fill:#f05a5a" textLength="33" lengthAdjust="spacingAndGlyphs">864</text>
<text class="b" x="1076" y="889" style="fill:#f05a5a" textLength="47" lengthAdjust="spacingAndGlyphs">1144</text>
<text class="b" x="378.500" y="889" style="fill:#ddd" textLength="22" lengthAdjust="spacingAndGlyphs">60</text>
<text class="b" x="1133" y="889" style="fill:#ddd" textLength="23" lengthAdjust="spacingAndGlyphs">80</text>
<text class="b" x="476.500" y="889" style="fill:#11e8f5" textLength="84" lengthAdjust="spacingAndGlyphs">8220.7亿</text>
<text class="b" x="1225" y="889" style="fill:#11e8f5" textLength="96" lengthAdjust="spacingAndGlyphs">10983.3亿</text>
<g>
<text x="596" y="889" style="font-size:20px;fill:#a0a0a0" textLength="62" lengthAdjust="spacingAndGlyphs">沪股通</text>
<text x="747" y="889" style="font-size:20px;fill:#a0a0a0">深</text>
<text x="1351" y="889" style="font-size:20px;fill:#a0a0a0" textLength="62" lengthAdjust="spacingAndGlyphs">深股通</text>
<text x="1498" y="889" style="font-size:20px;fill:#a0a0a0" textLength="84" lengthAdjust="spacingAndGlyphs">创业板指</text>
</g>
<g fill="none" stroke="#8a8a8a"><circle cx="672" cy="881" r="9"/><circle cx="1427" cy="881" r="9"/></g>
<text x="672" y="886" class="c" style="fill:#999;font-size:13px">?</text><text x="1427" y="886" class="c" style="fill:#999;font-size:13px">?</text>
<path d="M687 881.500H709M1442 881.500H1464" stroke="#bbb" stroke-width="2.500"/>
<circle cx="1894" cy="880" r="4" fill="none" stroke="#999" stroke-width="2"/>
<circle cx="1894" cy="880" r="8" fill="none" stroke="#999" stroke-width="2"/>
<circle cx="1894" cy="880" r="10" fill="none" stroke="#999" stroke-width="3" stroke-dasharray="4 6.470"/>

<!-- status 2 -->
<rect x="0" y="896" width="1920" height="34" fill="#1b1b1b"/>
<path d="M0 896.500H1920" stroke="#333"/>
<path d="M194.500 897V930M1219.500 897V930M1517.500 897V930" stroke="#2e2e2e"/>
<path d="M17 904h13v6M17 904v16h8M21 909h7M21 913h5M25 922l10-11 3 3-10 10z" fill="none" stroke="#8a8a8a" stroke-width="1.500"/>
<rect x="88.500" y="903.500" width="17" height="13" fill="none" stroke="#8a8a8a" stroke-width="1.500"/>
<path d="M97 916v5M91 922h12" stroke="#8a8a8a" stroke-width="2"/>
<path d="M92 907l5 6 4-6" stroke="#8a8a8a" fill="none"/>
<g>
<text class="r2" x="37" y="921" textLength="35" lengthAdjust="spacingAndGlyphs">留言</text>
<text class="r2" x="109" y="921" textLength="73" lengthAdjust="spacingAndGlyphs">最快主站</text>
<text class="r2" x="206" y="921" textLength="94" lengthAdjust="spacingAndGlyphs">24小时直播:</text>
<text class="r2" x="290" y="921" clip-path="url(#cn)">港</text>
<text class="r2" x="309" y="921" textLength="78" lengthAdjust="spacingAndGlyphs">跌超3%</text>
<text class="r2" x="427" y="921" textLength="51" lengthAdjust="spacingAndGlyphs">14:29</text>
<text class="r2" x="494" y="921" textLength="394" lengthAdjust="spacingAndGlyphs">三大指数午后持续回落 创业板指再度跌2%</text>
<text class="r2" x="928" y="921" textLength="50" lengthAdjust="spacingAndGlyphs">14:29</text>
<text class="r2" x="994" y="921" clip-path="url(#cm)" style="font-size:21px">容百科技发布全固态电池</text>
<text class="r2" x="1466" y="921" textLength="46" lengthAdjust="spacingAndGlyphs">[全部]</text>
</g>
<path d="M206 924.500H300" stroke="#aaa"/>
<path d="M1235.500 906l6.500 8-6.500 8-6.500-8z" fill="#35e070"/>
<text x="1261" y="921" style="fill:#35e070;font-size:20px" textLength="85" lengthAdjust="spacingAndGlyphs">元隆雅图</text>
<text x="1358" y="921" style="fill:#35e070;font-size:20px" textLength="83" lengthAdjust="spacingAndGlyphs">大笔卖出</text>
<rect x="1523.500" y="902" width="120.500" height="24" rx="12" fill="#5f5f5f"/>
<circle cx="1541" cy="912" r="5.500" fill="none" stroke="#bbb" stroke-width="1.500"/><path d="M1545 916l5 6" stroke="#bbb" stroke-width="1.500"/>
<path d="M1654 921c3-2 3-5 4-9s3-6 5-6 4 2 5 6 1 7 4 9zM1660 922h6v3h-6z" fill="#f5f5b8"/>
<path d="M1688 918h6v8h-6zM1697 912h6v14h-6zM1706 904h6v22h-6z" fill="#22c83a"/>
<text x="1725.500" y="921" style="fill:#999;font-weight:700;font-size:20px" textLength="29" lengthAdjust="spacingAndGlyphs">CN</text>
<text x="1768" y="921" style="fill:#999;font-weight:700;font-size:20px" textLength="51" lengthAdjust="spacingAndGlyphs">11/14</text>
<text x="1834" y="921" style="fill:#999;font-weight:700;font-size:20px" textLength="83" lengthAdjust="spacingAndGlyphs">14:56:19</text>

<!-- taskbar -->
<rect x="0" y="930" width="1920" height="72" fill="url(#tb)"/>
<rect x="0" y="930" width="1920" height="2" fill="#d8d4cc"/>
<path d="M31 950h16.500v16.500H31zM49 950h17v16.500H49zM31 968h16.500v16.500H31zM49 968h17v16.500H49z" fill="url(#win)"/>
<rect x="89" y="943.500" width="324" height="44.500" rx="22" fill="#faf7f2" stroke="#e4e0d9" stroke-width="1.500"/>
<circle cx="114" cy="965" r="8.500" fill="none" stroke="#222" stroke-width="2.500"/><path d="M120 972l6 7" stroke="#222" stroke-width="2.500"/>
<text x="142" y="973" style="font-size:21px;fill:#555">搜索</text>
<!-- lotus -->
<path d="M342 982l10-20" stroke="#b08050" stroke-width="5" stroke-linecap="round"/><circle cx="352" cy="960" r="5" fill="#c06a30"/>
<path d="M362 974c6-5 28-6 45 3-2 3-8 3-14 3-12 1-28 2-31-6z" fill="#4aa85a"/>
<g fill="#e18ed0">
<ellipse cx="375" cy="964" rx="5" ry="10" fill="#d874c0"/>
<ellipse cx="367" cy="966" rx="4.500" ry="9" transform="rotate(-30 367 966)"/>
<ellipse cx="383" cy="966" rx="4.500" ry="9" transform="rotate(30 383 966)"/>
<ellipse cx="364" cy="971" rx="4" ry="8" transform="rotate(-62 364 971)"/>
<ellipse cx="386" cy="971" rx="4" ry="8" transform="rotate(62 386 971)"/>
<ellipse cx="375" cy="973" rx="9" ry="4.500" fill="#d268ba"/>
</g>
<circle cx="375" cy="967" r="2.500" fill="#f2d24c"/>
<!-- edge -->
<circle cx="452" cy="966" r="18" fill="url(#ed)"/>
<path d="M434 964c2-10 10-16 18-16 10 0 18 8 18 17 0 6-6 8-12 7-5-1-5-5-2-7-2-6-10-7-14-4-3 1-6 4-8 3z" fill="#33c48a"/>
<path d="M445 970c0-6 6-9 11-7 2 2 0 6-1 7 2 5 8 6 14 3-3 6-9 10-15 9-6-1-9-6-9-12z" fill="#f1f4f4"/>
<path d="M449 983c-8-2-13-8-14-16 4 5 9 6 12 4 1 5 4 10 9 12z" fill="#0d5eb0"/>
<!-- folder -->
<path d="M500 950h13l4 5h19v28h-36z" fill="#d99a1c"/><rect x="500" y="954.500" width="36" height="28.500" fill="#fcd45c"/>
<path d="M506 983v-9a2 2 0 0 1 2-2h20a2 2 0 0 1 2 2v9z" fill="#1e7cd8"/><path d="M512 977h12" stroke="#0c4c92" stroke-width="1.500"/>
<!-- ie -->
<path d="M572 968c0-10 7-16 15-16s13 6 13 15v2h-19c1 5 5 8 12 6l4 5c-3 2-7 3-11 3-9 0-14-7-14-15z" fill="#6fc52c"/>
<path d="M581 964h10c0-4-2-6-5-6s-5 2-5 6z" fill="#f3eee6"/>
<path d="M569 983c-3-8 4-22 21-31 6-3 10-4 10-1" fill="none" stroke="#6fc52c" stroke-width="2"/>
<text x="590" y="983" style="font-size:8px;fill:#4a8a18;font-weight:700">AI</text>
<rect x="580" y="991" width="9" height="3.500" rx="1.700" fill="#888"/>
<!-- app -->
<rect x="622" y="938" width="56.500" height="56.500" rx="4" fill="#faf7f3"/>
<circle cx="649.500" cy="965.500" r="17.500" fill="#e8590c"/>
<path d="M636 978c0-9 7-17 19-21-7 5-12 11-14 20zM639 966c3-7 10-12 19-13-6 3-11 7-14 12zM648 979c2-7 7-13 15-17-1 7-4 13-8 18z" fill="#fff"/>
<rect x="638" y="990" width="24" height="5" rx="2.500" fill="#1677d8"/>
<!-- tray -->
<path d="M1454 970l7-7 7 7" stroke="#222" stroke-width="1.800" fill="none"/>
<path d="M1498 966c-1-7 4-12 10-12 4 0 7 1 10 4M1518 953v6h-6M1498 972h7M1498 972v6M1499 973c2 3 5 5 9 5" stroke="#333" stroke-width="1.300" fill="none"/>
<circle cx="1515" cy="972" r="6" fill="#f09818"/>
<circle cx="1557" cy="966" r="11" fill="#f2d92a"/>
<path d="M1547 960c3-6 11-8 17-4l-3 2c-4-2-9-1-11 3zM1567 972c-3 6-11 8-17 4l3-2c4 2 9 1 11-3z" fill="#2a9d3a"/>
<path d="M1557 960v12M1551 966h12" stroke="#158a2a" stroke-width="2.500"/>
<text x="1604" y="973" class="c" style="font-size:20px;fill:#222">中</text>
<path d="M1642 963c6-6 17-6 23 0" stroke="#b0b0b0" fill="none" stroke-width="1.300"/><path d="M1646 967c4-4 11-4 15 0M1649 970c2-2 7-2 9 0" stroke="#333" fill="none" stroke-width="1.500"/><circle cx="1653.500" cy="973" r="1.800" fill="#222"/>
<path d="M1678 963h4l6-5v16l-6-5h-4z" fill="none" stroke="#333" stroke-width="1.300"/>
<path d="M1692 961c2 3 2 7 0 10" stroke="#555" fill="none"/><path d="M1696 958c4 5 4 11 0 16" stroke="#bbb" fill="none"/>
<rect x="1715" y="959" width="19" height="13" rx="2" fill="none" stroke="#222" stroke-width="1.500"/><rect x="1718" y="961.500" width="13" height="8" fill="#222"/><rect x="1735" y="963" width="2.500" height="5" fill="#222"/>
<path d="M1721 953l-5 7h5l-3 6" stroke="#222" fill="none" stroke-width="1.500"/>
<text x="1855" y="960" text-anchor="end" style="font-size:17px;fill:#222" textLength="44" lengthAdjust="spacingAndGlyphs">14:56</text>
<text x="1855" y="984" text-anchor="end" style="font-size:17px;fill:#222" textLength="93" lengthAdjust="spacingAndGlyphs">2025/11/14</text>
<path d="M1872 973c2-2 2-5 3-9 1-3 3-5 5-5s3 1 4 3M1872 973h16M1877 976h5" fill="none" stroke="#222" stroke-width="1.300"/>
<text x="1883" y="965" style="font-size:9px;fill:#222">z</text><text x="1886" y="958" style="font-size:8px;fill:#222">z</text>
</svg>
</body></html>
